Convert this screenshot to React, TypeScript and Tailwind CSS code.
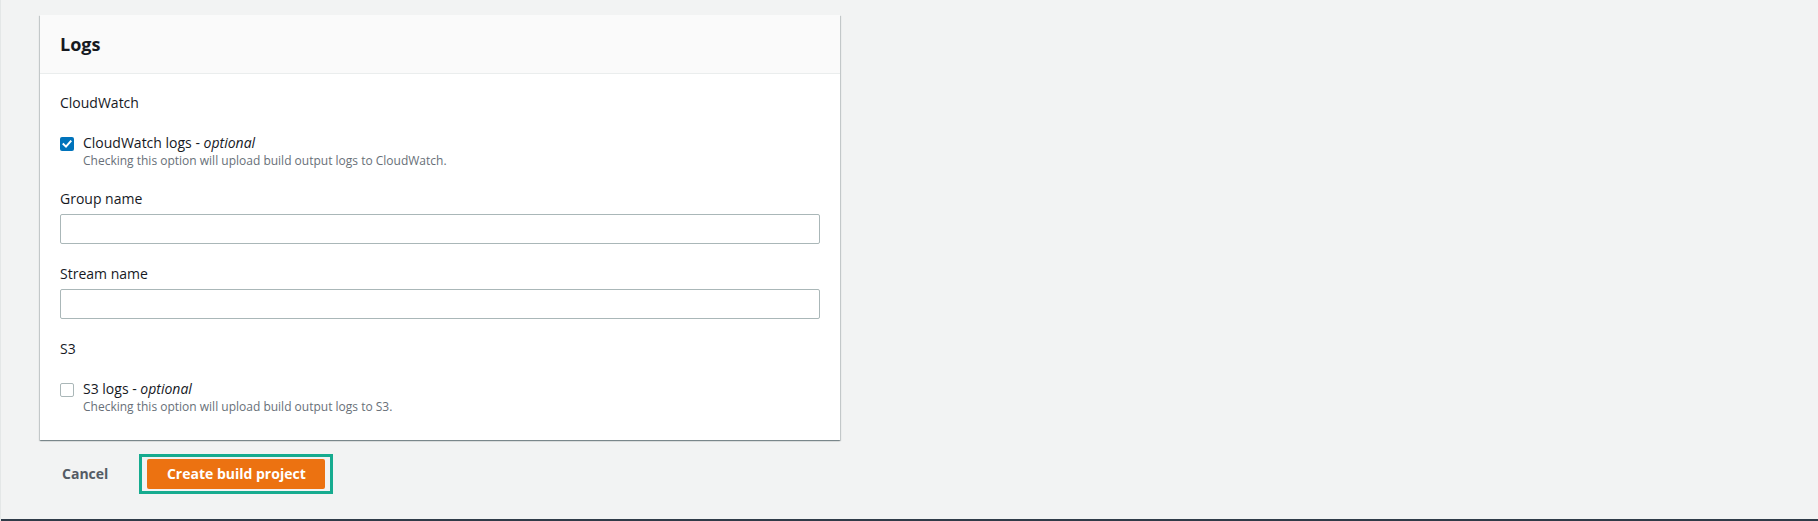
import React from 'react';

const CheckBox = ({ checked }: { checked: boolean }) =>
  checked ? (
    <span className="mt-[4px] flex h-[14px] w-[14px] shrink-0 items-center justify-center rounded-[2px] bg-[#0073bb]">
      <svg width="10" height="10" viewBox="0 0 10 10" fill="none">
        <path d="M1.5 5.2 L4 7.6 L8.6 2.4" stroke="#ffffff" strokeWidth="2" strokeLinecap="square" />
      </svg>
    </span>
  ) : (
    <span className="mt-[4px] h-[14px] w-[14px] shrink-0 rounded-[2px] border border-[#aab7b8] bg-white" />
  );

const CheckRow = ({ checked, label, desc }: { checked: boolean; label: string; desc: string }) => (
  <div className="mt-5 flex gap-[9px]">
    <CheckBox checked={checked} />
    <div className="flex flex-col">
      <span className="text-sm leading-5 text-[#16191f]">
        {label} - <i>optional</i>
      </span>
      <span className="text-xs leading-4 text-[#687078]">{desc}</span>
    </div>
  </div>
);

const TextField = ({ label }: { label: string }) => (
  <div className="mt-5 flex flex-col">
    <span className="text-sm leading-5 text-[#16191f]">{label}</span>
    <input className="mt-[5px] h-[30px] w-full rounded-[2px] border border-[#aab7b8] bg-white px-2 text-sm outline-none" />
  </div>
);

export default function App() {
  return (
    <div className="flex h-[521px] w-full flex-col border-l border-[#e4e7e7] bg-[#f2f3f3] font-['Open_Sans',sans-serif]">
      <div className="pl-[39px] pt-[15px]">
        {/* Logs card */}
        <div className="w-[800px] bg-white shadow-[0_1px_1px_0_rgba(0,28,36,0.3),1px_1px_1px_0_rgba(0,28,36,0.15),-1px_1px_1px_0_rgba(0,28,36,0.15)]">
          <div className="flex h-[59px] items-center border-b border-[#eaeded] bg-[#fafafa] px-5">
            <h2 className="text-lg font-bold text-[#16191f]">Logs</h2>
          </div>
          <div className="px-5 pb-[25px] pt-[19px]">
            <div className="text-sm leading-5 text-[#16191f]">CloudWatch</div>
            <CheckRow
              checked
              label="CloudWatch logs"
              desc="Checking this option will upload build output logs to CloudWatch."
            />
            <TextField label="Group name" />
            <TextField label="Stream name" />
            <div className="mt-5 text-sm leading-5 text-[#16191f]">S3</div>
            <CheckRow checked={false} label="S3 logs" desc="Checking this option will upload build output logs to S3." />
          </div>
        </div>

        <div className="mt-[14px] flex items-center">
          <button className="ml-[22px] text-sm font-bold leading-5 text-[#545b64]">Cancel</button>
          <div className="ml-[31px] border-[3px] border-[#16ab8f] px-[5px] py-[2px]">
            <button className="h-[30px] w-[178px] rounded-[2px] bg-[#ec7211] text-sm font-bold text-white">
              Create build project
            </button>
          </div>
        </div>
      </div>
      <div className="flex-1" />
      <div className="h-[2px] bg-[#2f3b48]" />
    </div>
  );
}
